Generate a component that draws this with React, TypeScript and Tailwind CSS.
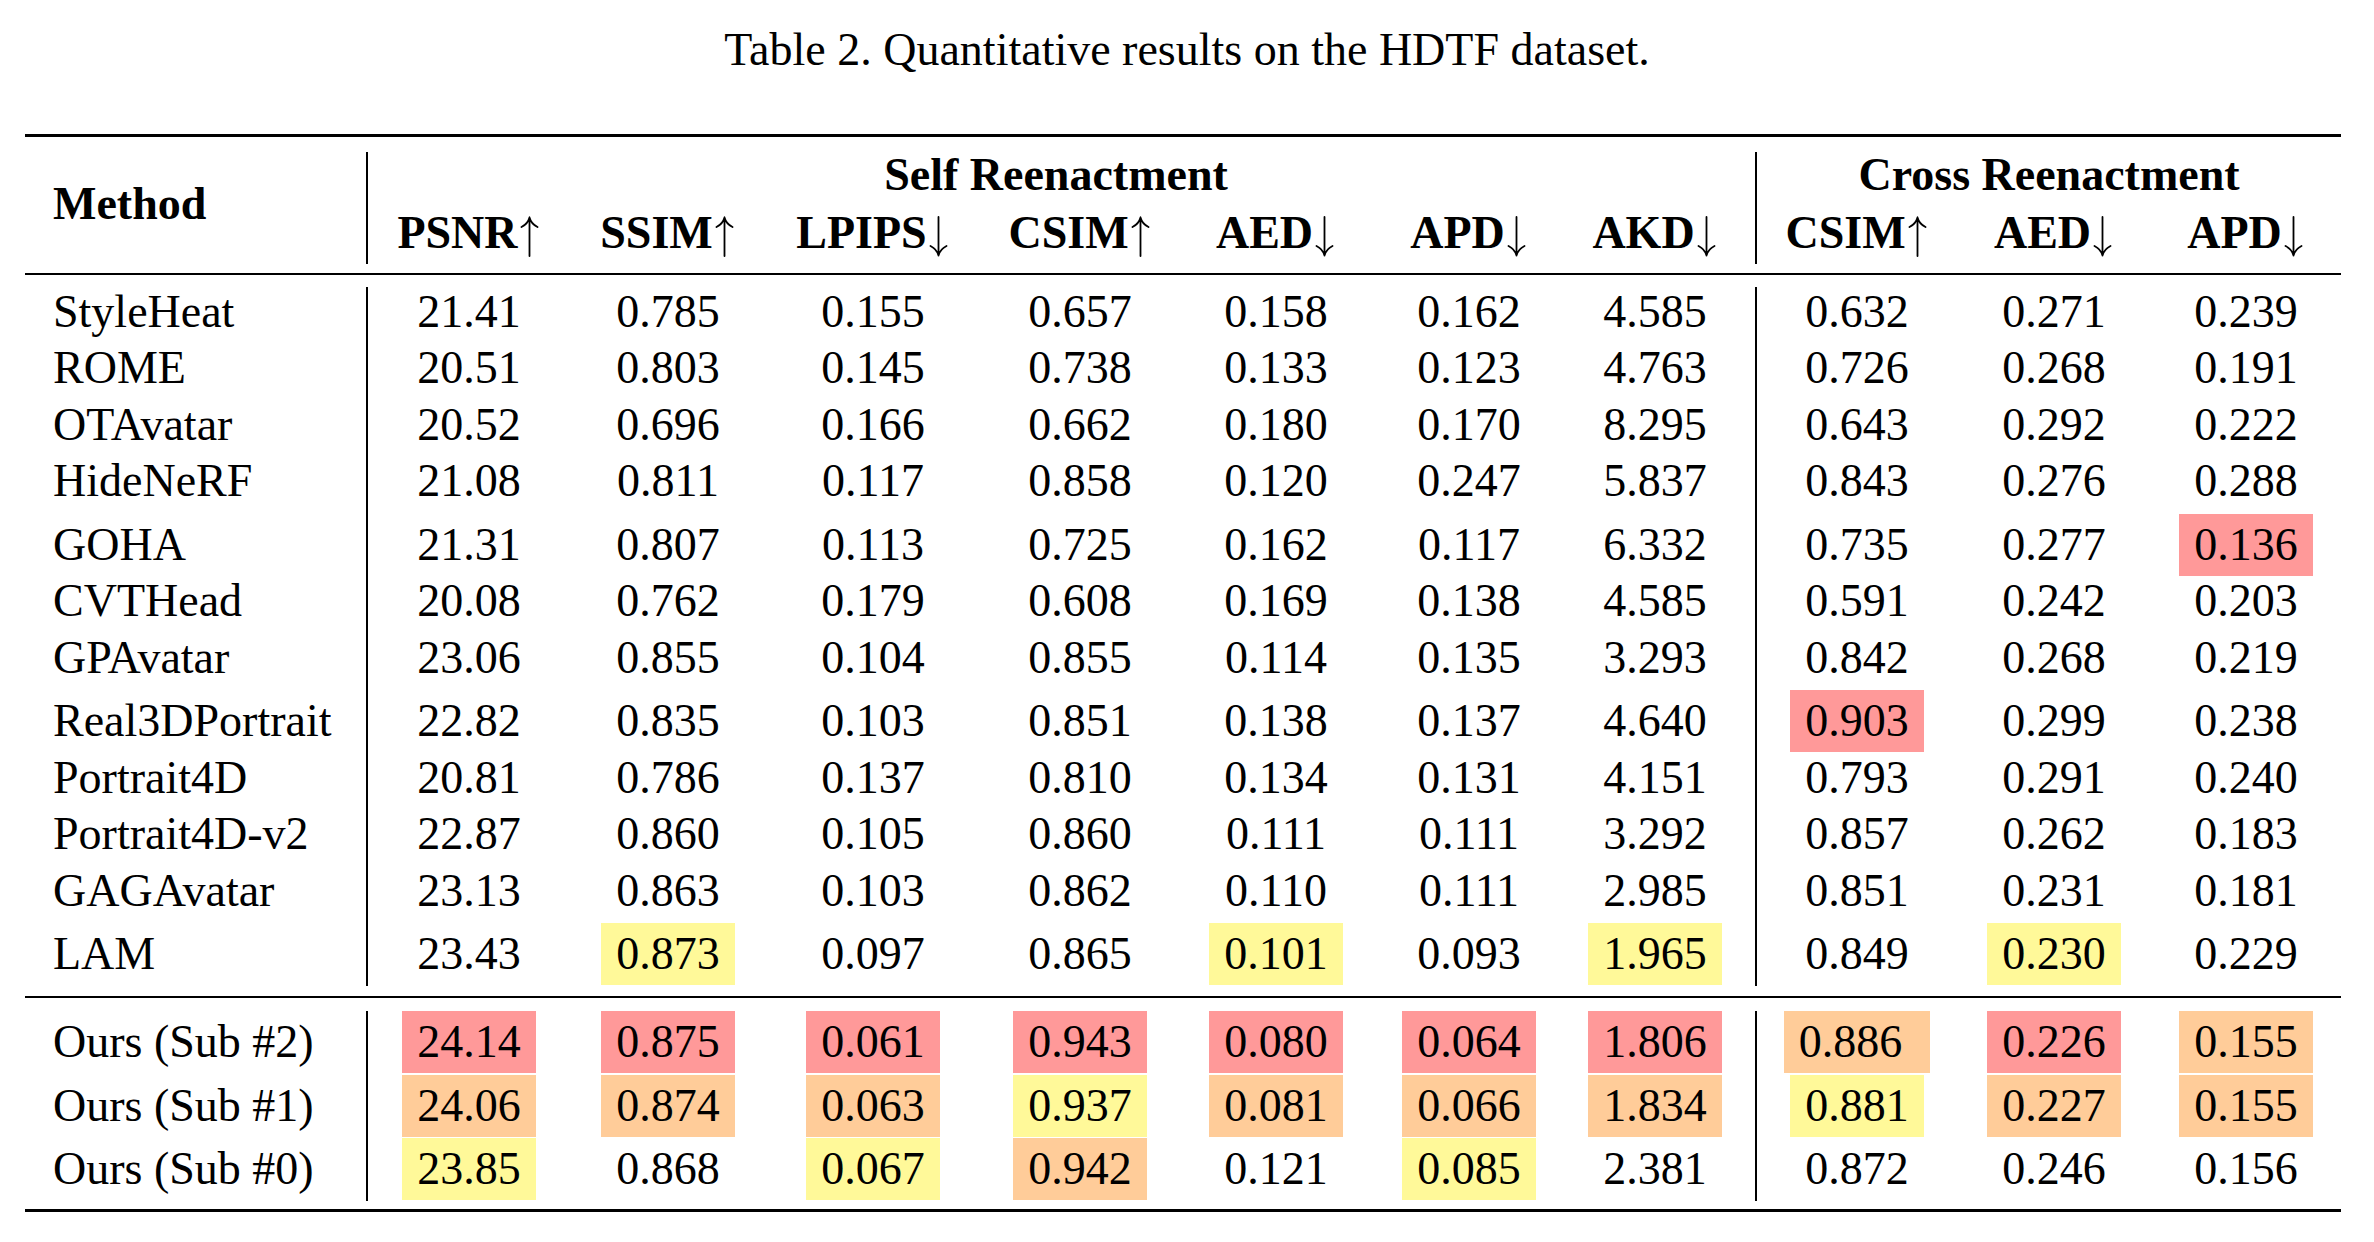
import React from 'react';

type Cell = string;

// prefix r: / o: / y: marks a highlighted cell, a trailing * marks the wide box
const rows: Cell[][] = [
  ['StyleHeat', '21.41', '0.785', '0.155', '0.657', '0.158', '0.162', '4.585', '0.632', '0.271', '0.239'],
  ['ROME', '20.51', '0.803', '0.145', '0.738', '0.133', '0.123', '4.763', '0.726', '0.268', '0.191'],
  ['OTAvatar', '20.52', '0.696', '0.166', '0.662', '0.180', '0.170', '8.295', '0.643', '0.292', '0.222'],
  ['HideNeRF', '21.08', '0.811', '0.117', '0.858', '0.120', '0.247', '5.837', '0.843', '0.276', '0.288'],
  ['GOHA', '21.31', '0.807', '0.113', '0.725', '0.162', '0.117', '6.332', '0.735', '0.277', 'r:0.136'],
  ['CVTHead', '20.08', '0.762', '0.179', '0.608', '0.169', '0.138', '4.585', '0.591', '0.242', '0.203'],
  ['GPAvatar', '23.06', '0.855', '0.104', '0.855', '0.114', '0.135', '3.293', '0.842', '0.268', '0.219'],
  ['Real3DPortrait', '22.82', '0.835', '0.103', '0.851', '0.138', '0.137', '4.640', 'r:0.903', '0.299', '0.238'],
  ['Portrait4D', '20.81', '0.786', '0.137', '0.810', '0.134', '0.131', '4.151', '0.793', '0.291', '0.240'],
  ['Portrait4D-v2', '22.87', '0.860', '0.105', '0.860', '0.111', '0.111', '3.292', '0.857', '0.262', '0.183'],
  ['GAGAvatar', '23.13', '0.863', '0.103', '0.862', '0.110', '0.111', '2.985', '0.851', '0.231', '0.181'],
  ['LAM', '23.43', 'y:0.873', '0.097', '0.865', 'y:0.101', '0.093', 'y:1.965', '0.849', 'y:0.230', '0.229'],
];

const ours: Cell[][] = [
  ['Ours (Sub #2)', 'r:24.14', 'r:0.875', 'r:0.061', 'r:0.943', 'r:0.080', 'r:0.064', 'r:1.806', 'o:0.886*', 'r:0.226', 'o:0.155'],
  ['Ours (Sub #1)', 'o:24.06', 'o:0.874', 'o:0.063', 'y:0.937', 'o:0.081', 'o:0.066', 'o:1.834', 'y:0.881', 'o:0.227', 'o:0.155'],
  ['Ours (Sub #0)', 'y:23.85', '0.868', 'y:0.067', 'o:0.942', '0.121', 'y:0.085', '2.381', '0.872', '0.246', '0.156'],
];

const selfCols = [
  { name: 'PSNR', up: true, w: 'w-[202px]' },
  { name: 'SSIM', up: true, w: 'w-[196px]' },
  { name: 'LPIPS', up: false, w: 'w-[214px]' },
  { name: 'CSIM', up: true, w: 'w-[200px]' },
  { name: 'AED', up: false, w: 'w-[192px]' },
  { name: 'APD', up: false, w: 'w-[194px]' },
  { name: 'AKD', up: false, w: 'w-[178px]' },
];

const crossCols = [
  { name: 'CSIM', up: true, w: 'w-[200px]' },
  { name: 'AED', up: false, w: 'w-[194px]' },
  { name: 'APD', up: false, w: 'w-[190px]' },
];

const bg: Record<string, string> = {
  r: 'bg-[#ff9999]',
  o: 'bg-[#ffcc99]',
  y: 'bg-[#fff999]',
};

function Arrow({ up }: { up: boolean }) {
  return (
    <svg
      width="23"
      height="41"
      viewBox="0 0 23 41"
      className="inline-block align-[-9px]"
      fill="none"
      stroke="black"
      strokeWidth="1.8"
      strokeLinecap="round"
    >
      {up ? (
        <path d="M11.5 1.5V40M11.5 1.5C10.5 5.5 7.5 9 3.5 11M11.5 1.5C12.5 5.5 15.5 9 19.5 11" />
      ) : (
        <path d="M11.5 1V39.5M11.5 39.5C10.5 35.5 7.5 32 3.5 30M11.5 39.5C12.5 35.5 15.5 32 19.5 30" />
      )}
    </svg>
  );
}

function Value({ raw }: { raw: string }) {
  let color = '';
  let text = raw;
  if (/^[roy]:/.test(raw)) {
    color = bg[raw[0]];
    text = raw.slice(2);
  }
  const wide = text.endsWith('*');
  if (wide) text = text.slice(0, -1);
  return (
    <span
      className={`inline-block whitespace-nowrap py-[6px] pl-[15px] leading-[50px] ${
        wide ? 'pr-[28px]' : 'pr-[15px]'
      } ${color}`}
    >
      {text}
    </span>
  );
}

function Row({ cells }: { cells: Cell[] }) {
  const tall = cells.some((c) => /^[roy]:/.test(c));
  const widths = [...selfCols, ...crossCols].map((c) => c.w);
  return (
    <div className={`flex ${tall ? 'h-[63.5px]' : 'h-[56.5px]'}`}>
      <div className="flex w-[341px] items-end pb-[1px] pl-[28px]">
        <span className="inline-block whitespace-nowrap py-[6px] leading-[50px]">{cells[0]}</span>
      </div>
      <div className="w-[2px] bg-black" />
      {cells.slice(1, 8).map((c, i) => (
        <div key={i} className={`flex items-end justify-center pb-[1px] ${widths[i]}`}>
          <Value raw={c} />
        </div>
      ))}
      <div className="w-[11px]" />
      <div className="w-[2px] bg-black" />
      {cells.slice(8).map((c, i) => (
        <div key={i} className={`flex items-end justify-center pb-[1px] ${widths[i + 7]}`}>
          <Value raw={c} />
        </div>
      ))}
    </div>
  );
}

export default function App() {
  return (
    <div className="h-[1242px] w-[2374px] bg-white font-['Liberation_Serif','Times_New_Roman',serif] text-[46px] text-black">
      <div className="pt-[25px] text-center leading-[49px]">
        Table 2. Quantitative results on the HDTF dataset.
      </div>

      <div className="mx-[25px] mt-[60px] w-[2316px]">
        <div className="h-[3px] bg-black" />

        {/* header */}
        <div className="mt-[15px] flex h-[112px] font-bold">
          <div className="w-[341px] pl-[28px] pt-[27px] leading-[49px]">Method</div>
          <div className="w-[2px] bg-black" />
          <div className="flex w-[1376px] flex-col">
            <div className="h-[56px] text-center leading-[45px]">Self Reenactment</div>
            <div className="flex h-[56px]">
              {selfCols.map((c) => (
                <div key={c.name} className={`whitespace-nowrap text-center leading-[49px] ${c.w}`}>
                  {c.name}
                  <Arrow up={c.up} />
                </div>
              ))}
            </div>
          </div>
          <div className="w-[11px]" />
          <div className="w-[2px] bg-black" />
          <div className="flex w-[584px] flex-col">
            <div className="h-[56px] text-center leading-[45px]">Cross Reenactment</div>
            <div className="flex h-[56px]">
              {crossCols.map((c) => (
                <div key={c.name} className={`whitespace-nowrap text-center leading-[49px] ${c.w}`}>
                  {c.name}
                  <Arrow up={c.up} />
                </div>
              ))}
            </div>
          </div>
        </div>

        <div className="mt-[9px] h-[2px] bg-black" />

        <div className="mt-[12px]">
          {rows.map((r) => (
            <Row key={r[0]} cells={r} />
          ))}
        </div>

        <div className="mt-[10px] h-[2px] bg-black" />

        <div className="mt-[12.5px]">
          {ours.map((r) => (
            <Row key={r[0]} cells={r} />
          ))}
        </div>

        <div className="mt-[8px] h-[3px] bg-black" />
      </div>
    </div>
  );
}
